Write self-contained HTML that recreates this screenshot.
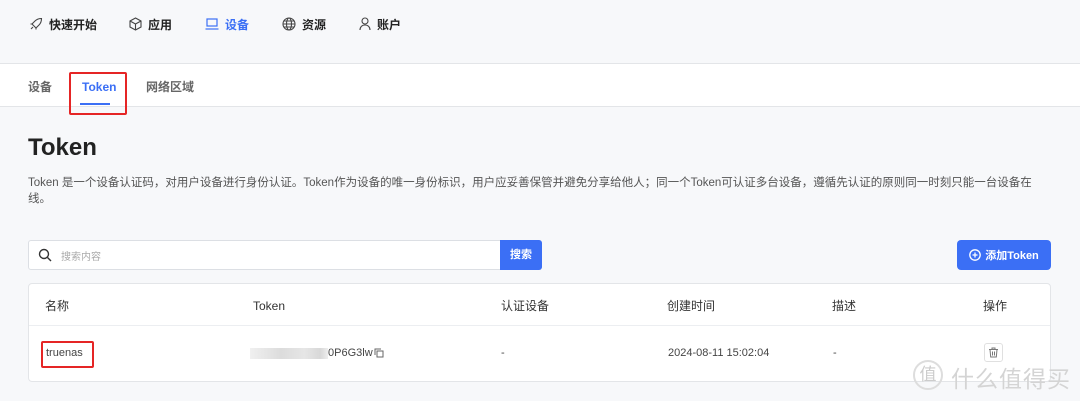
<!DOCTYPE html>
<html><head><meta charset="utf-8"><style>
*{box-sizing:border-box;margin:0;padding:0}
body{width:1080px;height:401px;overflow:hidden;background:#f7f8fa;font-family:"Liberation Sans","Noto Sans CJK SC",sans-serif;color:#333;position:relative}
.abs{position:absolute}
.nav{top:0;left:0;width:1080px;height:64px;background:#f7f8fa;border-bottom:1px solid #e3e5e8}
.ni{top:16px;font-size:12px;font-weight:bold;color:#222;display:flex;align-items:center;gap:6px;height:16px}
.tabs{top:64px;left:0;width:1080px;height:43px;background:#fff;border-bottom:1px solid #e3e5e8}
.tab{top:78px;font-size:12px;color:#666;font-weight:bold}
.red{border:2px solid #e52525;border-radius:2px}
.th{top:297px;font-size:12px;color:#333}
.td{top:347px;font-size:11px;color:#444}
</style></head><body>
<div class="abs nav"></div>
<div class="abs ni" style="left:29px"><svg width="14" height="14" viewBox="0 0 14 14" fill="none" stroke="#444" stroke-width="1.1"><path d="M5 9l-2-2 3-3c2-2 4-2.5 6.5-2.5C12.5 4 12 6 10 8L7 11 5 9zM3 7l-1.5 0M7 11v1.5M4 10l-2 2"/></svg>快速开始</div>
<div class="abs ni" style="left:129px"><svg width="13" height="14" viewBox="0 0 13 14" fill="none" stroke="#444" stroke-width="1.1"><path d="M6.5 1L12 4v6l-5.5 3L1 10V4zM1 4l5.5 3L12 4M6.5 7v6"/></svg>应用</div>
<div class="abs ni" style="left:205px;color:#3b6ff5"><svg width="14" height="12" viewBox="0 0 14 12" fill="none" stroke="#3b6ff5" stroke-width="1.2"><rect x="2" y="1" width="10" height="7"/><path d="M0.5 11h13"/></svg>设备</div>
<div class="abs ni" style="left:282px"><svg width="14" height="14" viewBox="0 0 14 14" fill="none" stroke="#444" stroke-width="1.1"><circle cx="7" cy="7" r="6"/><ellipse cx="7" cy="7" rx="2.5" ry="6"/><path d="M1 7h12M2 4h10M2 10h10"/></svg>资源</div>
<div class="abs ni" style="left:359px"><svg width="12" height="14" viewBox="0 0 12 14" fill="none" stroke="#444" stroke-width="1.1"><circle cx="6" cy="4" r="3"/><path d="M1 13c0-3 2-5 5-5s5 2 5 5"/></svg>账户</div>

<div class="abs tabs"></div>
<div class="abs tab" style="left:28px">设备</div>
<div class="abs tab" style="left:82px;top:80px;color:#3b6ff5">Token</div>
<div class="abs" style="left:80px;top:103px;width:30px;height:2px;background:#3b6ff5"></div>
<div class="abs tab" style="left:146px">网络区域</div>
<div class="abs red" style="left:69px;top:72px;width:58px;height:43px"></div>

<div class="abs" style="left:28px;top:134px;font-size:24px;font-weight:bold;color:#222">Token</div>
<div class="abs" style="left:28px;top:175px;width:1020px;font-size:11.5px;line-height:16px;color:#555">Token 是一个设备认证码，对用户设备进行身份认证。Token作为设备的唯一身份标识，用户应妥善保管并避免分享给他人；同一个Token可认证多台设备，遵循先认证的原则同一时刻只能一台设备在线。</div>

<div class="abs" style="left:28px;top:240px;width:514px;height:30px;background:#fff;border:1px solid #dcdfe4;border-radius:3px"></div>
<svg class="abs" style="left:38px;top:248px" width="14" height="14" viewBox="0 0 14 14" fill="none" stroke="#333" stroke-width="1.4"><circle cx="6" cy="6" r="4.5"/><path d="M9.5 9.5L13 13"/></svg>
<div class="abs" style="left:61px;top:248px;font-size:10px;color:#aaa">搜索内容</div>
<div class="abs" style="left:500px;top:240px;width:42px;height:30px;background:#3b6ff5;border-radius:0 3px 3px 0;color:#fff;font-size:11px;font-weight:bold;text-align:center;line-height:30px">搜索</div>

<div class="abs" style="left:957px;top:240px;width:94px;height:30px;background:#3b6ff5;border-radius:4px;color:#fff;font-size:11px;font-weight:bold;display:flex;align-items:center;justify-content:center;gap:4px"><svg width="12" height="12" viewBox="0 0 12 12" fill="none" stroke="#fff" stroke-width="1.3"><circle cx="6" cy="6" r="5.2"/><path d="M6 3.5v5M3.5 6h5"/></svg>添加Token</div>

<div class="abs" style="left:28px;top:283px;width:1023px;height:99px;background:#fff;border:1px solid #e3e5e8;border-radius:4px"></div>
<div class="abs" style="left:29px;top:325px;width:1021px;height:1px;background:#eceef1"></div>
<div class="abs th" style="left:45px">名称</div>
<div class="abs th" style="left:253px;top:299px">Token</div>
<div class="abs th" style="left:501px">认证设备</div>
<div class="abs th" style="left:667px">创建时间</div>
<div class="abs th" style="left:832px">描述</div>
<div class="abs th" style="left:983px">操作</div>

<div class="abs td" style="left:46px">truenas</div>
<div class="abs red" style="left:41px;top:341px;width:53px;height:27px"></div>
<div class="abs" style="left:250px;top:348px;width:78px;height:11px;background:linear-gradient(90deg,#f0f0f0,#dcdcdc 40%,#e6e6e6 70%,#d8d8d8 90%,#eee)"></div>
<div class="abs td" style="left:328px">0P6G3lw</div>
<svg class="abs" style="left:374px;top:348px" width="10" height="10" viewBox="0 0 10 10" fill="none" stroke="#666" stroke-width="1"><rect x="3" y="3" width="6" height="6"/><path d="M1 7V1h6"/></svg>
<div class="abs td" style="left:501px">-</div>
<div class="abs td" style="left:668px">2024-08-11 15:02:04</div>
<div class="abs td" style="left:833px">-</div>
<div class="abs" style="left:984px;top:343px;width:19px;height:19px;border:1px solid #e0e0e0;border-radius:3px"></div>
<svg class="abs" style="left:988px;top:347px" width="11" height="11" viewBox="0 0 11 11" fill="none" stroke="#777" stroke-width="1"><path d="M1 2.5h9M4 2.5V1h3v1.5M2 2.5l.7 7.5h5.6L9 2.5M4.5 4.5v4M6.5 4.5v4"/></svg>

<div class="abs" style="left:913px;top:360px;width:30px;height:30px;border:2px solid #ddd;border-radius:50%;color:#ccc;font-size:17px;text-align:center;line-height:26px">值</div>
<div class="abs" style="left:951px;top:360px;font-size:23px;color:#d4d4d4;letter-spacing:1px">什么值得买</div>
</body></html>
